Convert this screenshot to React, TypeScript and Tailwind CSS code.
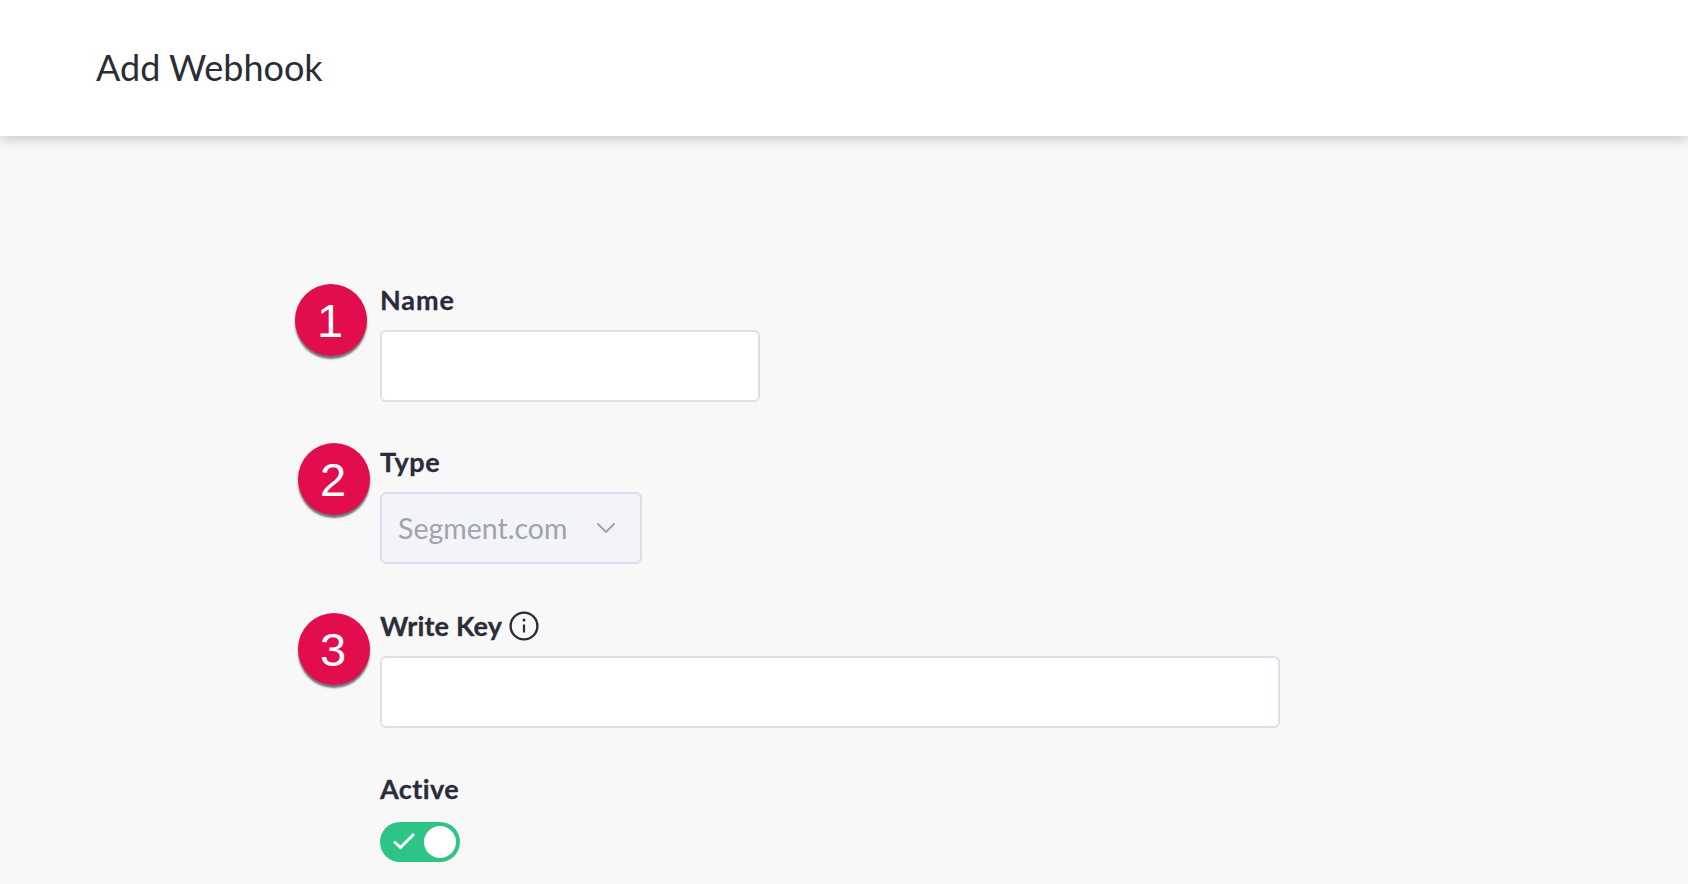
import { ChevronDown } from 'lucide-react'

function Badge({ n, className }: { n: string; className: string }) {
  return (
    <div
      className={`absolute w-[72px] h-[72px] pt-[3px] pr-[2px] rounded-full bg-[#e20d4d] shadow-[0_3px_2px_rgba(0,0,0,0.55)] flex items-center justify-center text-white text-[47px] font-['Liberation_Sans',sans-serif] ${className}`}
    >
      {n}
    </div>
  )
}

const labelClass = 'text-[27px] font-bold leading-9 [-webkit-text-stroke:0.3px_#2a2d38]'

export default function App() {
  return (
    <div className="relative h-[884px] overflow-hidden bg-[#f8f8f9] font-['Lato',sans-serif] text-[#2a2d38]">
      <header className="h-[136px] pb-[2px] bg-white shadow-[0_3px_12px_rgba(0,0,0,0.2)] flex items-center pl-24">
        <h1 className="text-[36px] font-normal leading-none">Add Webhook</h1>
      </header>

      <main className="pl-[380px] pt-[146px]">
        <div className="mb-[42px]">
          <label className={`block mb-[12px] tracking-[0.9px] ${labelClass}`}>Name</label>
          <input className="block w-[380px] h-[72px] bg-white border-2 border-[#dcdfe9] rounded-[6px]" />
        </div>

        <div className="mb-[44px]">
          <label className={`block mb-[12px] tracking-[0.6px] ${labelClass}`}>Type</label>
          <div className="w-[262px] h-[72px] bg-[#f3f4f7] border-2 border-[#dcdfe9] rounded-[6px] flex items-center justify-between pl-[16px] pr-[18px] text-[#a0a2ad] text-[28.5px]">
            <span>Segment.com</span>
            <ChevronDown size={32} strokeWidth={1.5} />
          </div>
        </div>

        <div className="mb-[43px]">
          <div className="flex items-center gap-[7px] mb-[12px]">
            <label className={`tracking-[0.15px] ${labelClass}`}>Write Key</label>
            <svg width="30" height="30" viewBox="0 0 30 30" fill="none" stroke="#2a2d38" strokeWidth="2.4">
              <circle cx="15" cy="15" r="13.4" />
              <path d="M15 13.5v8" strokeWidth="2.2" />
              <circle cx="15" cy="9" r="1.5" fill="#2a2d38" stroke="none" />
            </svg>
          </div>
          <input className="block w-[900px] h-[72px] bg-white border-2 border-[#dcdfe9] rounded-[6px]" />
        </div>

        <div>
          <label className={`block mb-[15px] tracking-[0.4px] ${labelClass}`}>Active</label>
          <div className="w-[80px] h-[40px] rounded-full bg-[#2ec486] flex items-center justify-between pl-[13px] pr-[4px]">
            <svg width="22" height="18" viewBox="0 0 22 18" fill="none" stroke="white" strokeWidth="3" className="mb-[2px]">
              <path d="M1 9.5l6.5 6L21 2" />
            </svg>
            <div className="w-[32px] h-[32px] rounded-full bg-white" />
          </div>
        </div>
      </main>

      <Badge n="1" className="left-[295px] top-[284px]" />
      <Badge n="2" className="left-[298px] top-[443px]" />
      <Badge n="3" className="left-[298px] top-[613px]" />
    </div>
  )
}
